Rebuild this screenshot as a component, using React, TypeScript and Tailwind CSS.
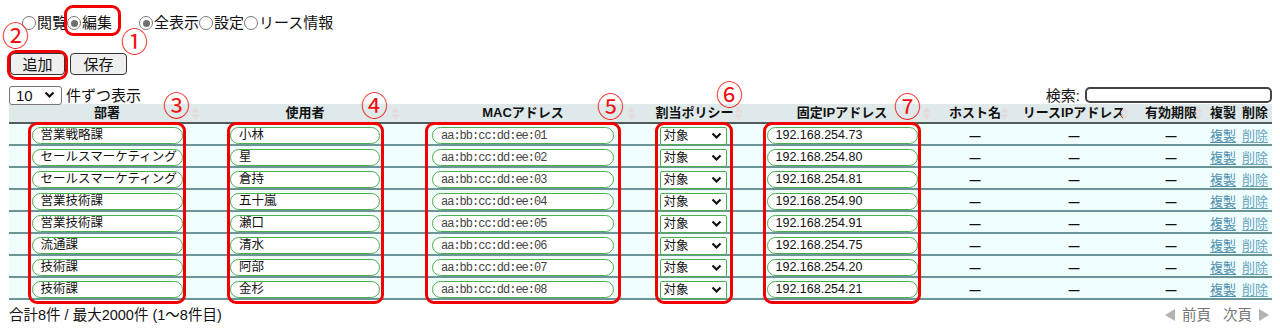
import React from "react";

type Row = { dept: string; user: string; mac: string; ip: string };

const rows: Row[] = [
  { dept: "営業戦略課", user: "小林", mac: "aa:bb:cc:dd:ee:01", ip: "192.168.254.73" },
  { dept: "セールスマーケティング", user: "星", mac: "aa:bb:cc:dd:ee:02", ip: "192.168.254.80" },
  { dept: "セールスマーケティング", user: "倉持", mac: "aa:bb:cc:dd:ee:03", ip: "192.168.254.81" },
  { dept: "営業技術課", user: "五十嵐", mac: "aa:bb:cc:dd:ee:04", ip: "192.168.254.90" },
  { dept: "営業技術課", user: "瀬口", mac: "aa:bb:cc:dd:ee:05", ip: "192.168.254.91" },
  { dept: "流通課", user: "清水", mac: "aa:bb:cc:dd:ee:06", ip: "192.168.254.75" },
  { dept: "技術課", user: "阿部", mac: "aa:bb:cc:dd:ee:07", ip: "192.168.254.20" },
  { dept: "技術課", user: "金杉", mac: "aa:bb:cc:dd:ee:08", ip: "192.168.254.21" },
];

const GRID =
  "grid grid-cols-[196px_200px_236px_107px_188px_78px_120px_74px_30px_34px]";

function Radio({ checked, label }: { checked?: boolean; label: string }) {
  return (
    <span className="inline-flex items-center">
      <span className="w-[14px] h-[14px] rounded-full border-[1.5px] border-[#7a7a7a] bg-white flex items-center justify-center mr-[1px]">
        {checked && <span className="w-[7px] h-[7px] rounded-full bg-[#6f6f6f]" />}
      </span>
      <span>{label}</span>
    </span>
  );
}

function SortIcon() {
  return (
    <svg
      className="absolute right-[5px] top-[2px]"
      width="9"
      height="15"
      viewBox="0 0 9 15"
    >
      <path d="M4.5 1 L8.5 6.5 L0.5 6.5 Z" fill="#e4dadf" />
      <path d="M4.5 14 L8.5 8.5 L0.5 8.5 Z" fill="#e4dadf" />
    </svg>
  );
}

function Circled({ ch, className }: { ch: string; className: string }) {
  // red annotation numbers laid over the table
  return (
    <span
      className={`absolute text-[27px] leading-[21px] text-[#f01010] font-['Noto_Sans_CJK_JP',sans-serif] ${className}`}
    >
      {ch}
    </span>
  );
}

function RedBox({ className }: { className: string }) {
  return (
    <div
      className={`absolute border-[3px] border-[#f00000] rounded-[9px] pointer-events-none ${className}`}
    />
  );
}

function Pill({ text, width, mono }: { text: string; width: string; mono?: boolean }) {
  return (
    <div
      className={`${width} h-[17px] rounded-full border-[1.5px] border-[#4cae4c] bg-white pl-[8px] overflow-hidden whitespace-nowrap flex items-center ${
        mono
          ? "font-['Liberation_Mono',monospace] text-[12px] tracking-[-1px] text-[#444]"
          : "text-[12.5px] text-[#111]"
      }`}
    >
      {text}
    </div>
  );
}

export default function App() {
  return (
    <div className="relative w-[1280px] h-[332px] bg-white text-[#111] font-['Liberation_Sans','Noto_Sans_CJK_JP',sans-serif] overflow-hidden">
      {/* mode radios */}
      <div className="pt-[14px] pl-[22px] h-[32px] flex items-center text-[15px] leading-[18px]">
        <Radio label="閲覧" />
        <Radio checked label="編集" />
        <span className="w-[27px]" />
        <Radio checked label="全表示" />
        <Radio label="設定" />
        <Radio label="リース情報" />
      </div>

      {/* buttons */}
      <div className="mt-[21px] pl-[10px] flex gap-[5px]">
        <button className="w-[55px] h-[22px] rounded-[4px] border-[1.5px] border-[#333] bg-[#efefef] text-[15px] leading-none">
          追加
        </button>
        <button className="w-[57px] h-[22px] rounded-[4px] border-[1.5px] border-[#333] bg-[#efefef] text-[15px] leading-none">
          保存
        </button>
      </div>

      {/* page size + search */}
      <div className="mt-[11px] pl-[9px] pr-[8px] h-[18px] flex items-center justify-between text-[15px]">
        <div className="flex items-center">
          <div className="w-[53px] h-[19px] rounded-[3px] border border-[#767676] bg-white flex items-center justify-between px-[6px]">
            <span className="text-[15px] leading-none">10</span>
            <svg width="11" height="8" viewBox="0 0 11 8">
              <path d="M1.5 1.5 L5.5 5.5 L9.5 1.5" stroke="#111" strokeWidth="2.2" fill="none" />
            </svg>
          </div>
          <span className="ml-[4px] leading-none">件ずつ表示</span>
        </div>
        <div className="flex items-center">
          <span className="leading-none mr-[5px]">検索:</span>
          <div className="w-[187px] h-[16px] rounded-[5px] border-2 border-[#444] bg-white" />
        </div>
      </div>

      {/* table */}
      <div className="ml-[9px] w-[1263px]">
        <div
          className={`${GRID} h-[20px] bg-[#dfe9ea] border-b-2 border-[#4f5d5d] text-[13px] font-bold leading-[18px]`}
        >
          {["部署", "使用者", "MACアドレス", "割当ポリシー", "固定IPアドレス", "ホスト名", "リースIPアドレス", "有効期限"].map(
            (h) => (
              <div key={h} className="relative flex items-center justify-center">
                {h}
                <SortIcon />
              </div>
            ),
          )}
          <div className="flex items-center justify-center">複製</div>
          <div className="flex items-center justify-center">削除</div>
        </div>

        {rows.map((r, i) => (
          <div
            key={i}
            className={`${GRID} h-[22px] bg-[#effdfd] border-b-2 border-[#6b9597] pt-[2px] items-center text-[13px]`}
          >
            <div className="flex justify-center">
              <Pill text={r.dept} width="w-[151px]" />
            </div>
            <div className="flex justify-center">
              <Pill text={r.user} width="w-[150px]" />
            </div>
            <div className="flex justify-center">
              <Pill text={r.mac} width="w-[182px]" mono />
            </div>
            <div className="flex justify-center pr-[3px]">
              <div className="w-[67px] h-[18px] rounded-[2px] border-[1.5px] border-[#4cae4c] bg-white flex items-center justify-between pl-[3px] pr-[4px]">
                <span className="text-[12.5px] leading-none">対象</span>
                <svg width="11" height="8" viewBox="0 0 11 8">
                  <path d="M1.5 1.5 L5.5 5.5 L9.5 1.5" stroke="#111" strokeWidth="2.2" fill="none" />
                </svg>
              </div>
            </div>
            <div className="flex justify-center">
              <Pill text={r.ip} width="w-[151px]" />
            </div>
            <div className="text-center font-bold text-[11px]">—</div>
            <div className="text-center font-bold text-[11px]">—</div>
            <div className="text-center font-bold text-[11px]">—</div>
            <div className="text-center text-[#4f8fae] underline underline-offset-2">複製</div>
            <div className="text-center text-[#6aa4bd] underline underline-offset-2">削除</div>
          </div>
        ))}
      </div>

      {/* footer */}
      <div className="mt-[6px] pl-[9px] pr-[10px] flex items-center justify-between text-[14.5px] leading-[18px]">
        <span>合計8件 / 最大2000件 (1〜8件目)</span>
        <div className="flex items-center text-[#777] gap-[6px]">
          <svg width="12" height="14" viewBox="0 0 12 14">
            <path d="M11 1 L1 7 L11 13 Z" fill="#b3b3b3" />
          </svg>
          <span>前頁</span>
          <span className="ml-[6px]">次頁</span>
          <svg width="12" height="14" viewBox="0 0 12 14">
            <path d="M1 1 L11 7 L1 13 Z" fill="#b3b3b3" />
          </svg>
        </div>
      </div>

      {/* annotations */}
      <RedBox className="left-[64px] top-[5px] w-[57px] h-[31px]" />
      <RedBox className="left-[7px] top-[50px] w-[61px] h-[30px]" />
      <RedBox className="left-[28px] top-[122px] w-[158px] h-[182px]" />
      <RedBox className="left-[227px] top-[122px] w-[157px] h-[182px]" />
      <RedBox className="left-[425px] top-[122px] w-[196px] h-[182px]" />
      <RedBox className="left-[655px] top-[122px] w-[78px] h-[182px]" />
      <RedBox className="left-[763px] top-[122px] w-[158px] h-[182px]" />
      <Circled ch="①" className="left-[121px] top-[30px]" />
      <Circled ch="②" className="left-[2px] top-[24px]" />
      <Circled ch="③" className="left-[163px] top-[94px]" />
      <Circled ch="④" className="left-[361px] top-[94px]" />
      <Circled ch="⑤" className="left-[597px] top-[95px]" />
      <Circled ch="⑥" className="left-[716px] top-[83px]" />
      <Circled ch="⑦" className="left-[894px] top-[95px]" />
    </div>
  );
}
